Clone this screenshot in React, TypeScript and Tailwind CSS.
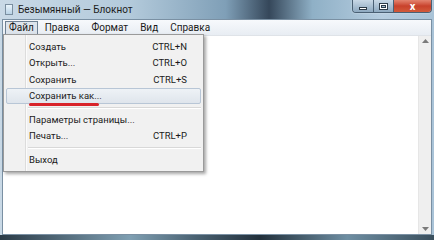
const font = { fontFamily: 'Roboto, "Noto Sans", sans-serif' }

type Item = { label: string; key?: string; active?: boolean; sep?: boolean }

const items: Item[] = [
  { label: "Создать", key: "CTRL+N" },
  { label: "Открыть...", key: "CTRL+O" },
  { label: "Сохранить", key: "CTRL+S" },
  { label: "Сохранить как...", active: true },
  { label: "", sep: true },
  { label: "Параметры страницы..." },
  { label: "Печать...", key: "CTRL+P" },
  { label: "", sep: true },
  { label: "Выход" },
]

function FileMenu() {
  return (
    <div className="absolute left-[3px] top-[34px] w-[201px] border border-[#9a9a9a] bg-[#f1f1f1] py-[3px] shadow-[2px_2px_3px_rgba(0,0,0,0.35)]">
      {/* gutter */}
      <div className="absolute left-[21px] top-0 bottom-0 w-[2px] border-l border-[#dcdcdc] bg-white/70" />
      {items.map((it, i) =>
        it.sep ? (
          <div key={i} className="relative flex h-[7px] items-center pl-[24px] pr-[2px]">
            <div className="h-[2px] w-full border-t border-[#d8d8d8] bg-white" />
          </div>
        ) : (
          <div key={i} className="relative flex h-[16.5px] items-center px-[2px]">
            <div
              className={
                "flex h-full w-full items-center rounded-[2px] pl-[22px] pr-[13px] " +
                (it.active ? "border border-[#b8c6d6] bg-gradient-to-b from-[#eef2f6] to-[#dfe5ec]" : "border border-transparent")
              }
            >
              <span className="relative flex-1 text-[9.5px] leading-none text-[#1a1a1a]">
                {it.label}
                {it.active && (
                  <span className="absolute left-[0px] top-[12px] h-[3px] w-[70px] rounded-full bg-[#d8232a]" />
                )}
              </span>
              {it.key && <span className="text-[9.5px] leading-none text-[#1a1a1a]">{it.key}</span>}
            </div>
          </div>
        )
      )}
    </div>
  )
}

function Controls() {
  return (
    <div className="absolute right-[2px] top-0 flex h-[13px] overflow-hidden rounded-b-[4px] border border-t-0 border-[#4a6074] shadow-[0_0_2px_rgba(255,255,255,0.6)]">
      <div className="flex w-[21px] items-center justify-center border-r border-[#4a6074] bg-gradient-to-b from-[#c8d8e6] to-[#8ea9c0]">
        <div className="mt-[5px] h-[3px] w-[8px] border border-[#2d3b48] bg-white" />
      </div>
      <div className="flex w-[20px] items-center justify-center border-r border-[#4a6074] bg-gradient-to-b from-[#c8d8e6] to-[#8ea9c0]">
        <div className="h-[7px] w-[9px] border border-[#2d3b48] bg-white">
          <div className="mx-auto mt-[1px] h-[3px] w-[5px] border border-[#2d3b48] bg-[#a5bccf]" />
        </div>
      </div>
      <div className="flex w-[37px] items-center justify-center bg-gradient-to-b from-[#e3836f] via-[#c8412b] to-[#d25a3a]">
        <span className="text-[11px] font-bold leading-none text-white" style={font}>x</span>
      </div>
    </div>
  )
}

export default function App() {
  return (
    <div
      className="relative flex h-[240px] w-[434px] flex-col overflow-hidden bg-[linear-gradient(90deg,#c9d9e6_0%,#b3cadb_30%,#7f9fb7_52%,#35475a_62%,#8fb0c6_72%,#b6cde0_88%,#a9c3d7_100%)]"
      style={font}
    >
      {/* title bar */}
      <div className="flex h-[19px] items-center gap-[5px] pl-[5px]">
        <div className="h-[11px] w-[8px] border border-[#7b8fa0] bg-gradient-to-b from-[#eaf4fb] to-[#b9d3e6]" />
        <span className="text-[10px] leading-none text-[#1c1c1c]">Безымянный — Блокнот</span>
      </div>
      <Controls />

      {/* client */}
      <div className="mx-[2px] mb-[5px] flex flex-1 flex-col border border-[#7a90a3] bg-white">
        <div className="flex h-[15px] items-center gap-[2px] bg-gradient-to-b from-[#f7f9fc] to-[#e8edf3] pl-[2px] text-[10px] leading-none text-[#1a1a1a]">
          <div className="flex h-[14px] items-center border border-[#6f8193] bg-[#dde4ec] px-[3px]">Файл</div>
          <div className="px-[5px]">Правка</div>
          <div className="px-[5px]">Формат</div>
          <div className="px-[5px]">Вид</div>
          <div className="px-[5px]">Справка</div>
        </div>
        <div className="flex flex-1 border-t border-[#dfe3e8]">
          <div className="flex-1 bg-white" />
          <div className="flex w-[13px] flex-col items-center justify-between bg-[#efefef] py-[3px] border-l border-[#e6e6e6]">
            <svg width="7" height="4" viewBox="0 0 7 4"><path d="M0 4 L3.5 0 L7 4 Z" fill="#7a7a7a" /></svg>
            <svg width="7" height="4" viewBox="0 0 7 4"><path d="M0 0 L3.5 4 L7 0 Z" fill="#7a7a7a" /></svg>
          </div>
        </div>
      </div>
      {/* bottom frame */}
      <div className="absolute bottom-0 left-0 right-0 h-[5px] bg-[linear-gradient(90deg,#2b3b47_0%,#7f9fb2_30%,#4a6272_45%,#22303b_60%,#6e8ea2_80%,#3a4f5d_100%)]" />

      <FileMenu />
    </div>
  )
}
